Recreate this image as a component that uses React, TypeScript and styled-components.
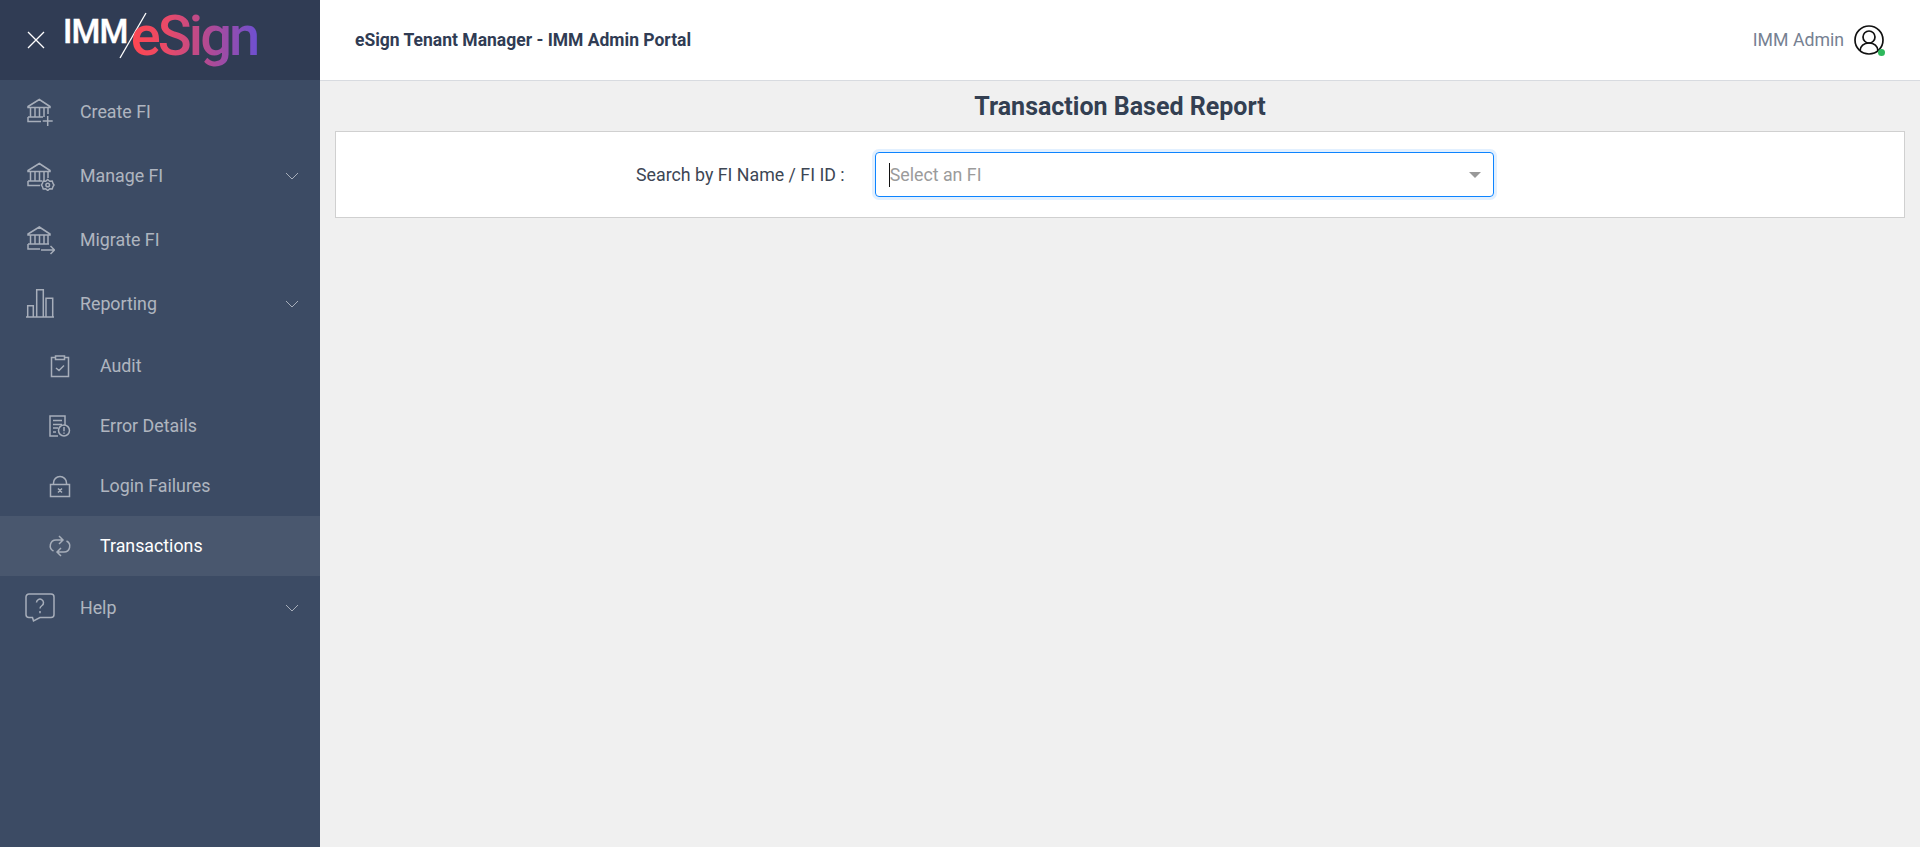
import React from 'react';
import styled, { createGlobalStyle } from 'styled-components';

const GlobalStyle = createGlobalStyle`
  html, body, #root {
    margin: 0;
    padding: 0;
    height: 100%;
  }
  body {
    font-family: Roboto, "Liberation Sans", sans-serif;
    background: #f0f0f0;
    overflow: hidden;
  }
  * {
    box-sizing: border-box;
  }
`;

const Page = styled.div`
  display: flex;
  height: 847px;
`;

const Sidebar = styled.aside`
  width: 320px;
  flex-shrink: 0;
  background: #3c4b64;
  display: flex;
  flex-direction: column;
`;

const Brand = styled.div`
  height: 80px;
  background: #303c54;
  display: flex;
  align-items: center;
  padding-left: 27px;
`;

const CloseButton = styled.button`
  width: 18px;
  height: 18px;
  padding: 0;
  margin-right: 18px;
  background: none;
  border: none;
  display: flex;
  cursor: pointer;
`;

const Logo = styled.div`
  display: flex;
  align-items: flex-start;
  height: 80px;
`;

const LogoImm = styled.span`
  font-size: 33px;
  font-weight: 500;
  line-height: 33px;
  letter-spacing: -0.8px;
  color: #fff;
  margin-top: 15px;
  -webkit-text-stroke: 0.4px #fff;
`;

const LogoSlash = styled.svg`
  width: 30px;
  height: 50px;
  margin: 11px -18px 0 -9px;
  flex-shrink: 0;
`;

const LogoESign = styled.span`
  font-size: 56px;
  font-weight: 500;
  line-height: 56px;
  letter-spacing: -2.9px;
  margin-top: 8px;
  padding-bottom: 10px;
  background: linear-gradient(90deg, #ff4650 0%, #e94a68 28%, #b04a94 62%, #6f50d0 100%);
  -webkit-background-clip: text;
  background-clip: text;
  color: transparent;
`;

const Nav = styled.nav`
  display: flex;
  flex-direction: column;
`;

const NavItem = styled.a<{ $sub?: boolean; $active?: boolean }>`
  height: ${({ $sub }) => ($sub ? '60px' : '64px')};
  display: flex;
  align-items: center;
  padding-left: ${({ $sub }) => ($sub ? '45px' : '25px')};
  padding-right: 21px;
  padding-bottom: 1px;
  font-size: 17.8px;
  color: ${({ $active }) => ($active ? '#fff' : 'rgba(255, 255, 255, 0.6)')};
  background: ${({ $active }) => ($active ? 'rgba(255, 255, 255, 0.07)' : 'transparent')};
  cursor: pointer;
`;

const NavIcon = styled.svg`
  width: 30px;
  height: 30px;
  margin-right: 25px;
  flex-shrink: 0;
  fill: none;
  stroke: #a7aeba;
  stroke-width: 1.5;
`;

const NavLabel = styled.span`
  flex: 1;
`;

const Chevron = styled.svg`
  width: 14px;
  height: 8px;
  fill: none;
  stroke: #a7aeba;
  stroke-width: 1;
`;

const Main = styled.div`
  flex: 1;
  display: flex;
  flex-direction: column;
  min-width: 0;
`;

const Header = styled.header`
  height: 81px;
  flex-shrink: 0;
  background: #fff;
  border-bottom: 1px solid #d8dbe0;
  display: flex;
  align-items: center;
  justify-content: space-between;
  padding: 0 36px 0 35px;
`;

const PortalName = styled.div`
  font-size: 17.5px;
  font-weight: 700;
  color: #303c54;
`;

const UserBox = styled.div`
  display: flex;
  align-items: center;
  gap: 10px;
  font-size: 17.7px;
  color: #768192;
`;

const Avatar = styled.div`
  width: 30px;
  height: 30px;
  position: relative;
`;

const AvatarSvg = styled.svg`
  width: 30px;
  height: 30px;
  fill: none;
  stroke: #111;
  stroke-width: 1.7;
  display: block;
`;

const OnlineDot = styled.span`
  position: absolute;
  right: -1px;
  bottom: -1px;
  width: 7px;
  height: 7px;
  border-radius: 50%;
  background: #2eb85c;
`;

const Content = styled.main`
  flex: 1;
  padding: 0 15px;
`;

const PageTitle = styled.h1`
  margin: 0;
  height: 50px;
  font-size: 25px;
  font-weight: 700;
  line-height: 51px;
  text-align: center;
  color: #333f52;
`;

const FilterCard = styled.section`
  height: 87px;
  background: #fff;
  border: 1px solid #d0d0d0;
  display: flex;
  align-items: center;
  padding-left: 300px;
`;

const FilterLabel = styled.label`
  font-size: 17.8px;
  color: #3d4654;
  margin-right: 30px;
  white-space: nowrap;
`;

const SelectBox = styled.div`
  width: 619px;
  height: 45px;
  border: 1px solid #0d84ff;
  border-radius: 4px;
  box-shadow: 0 0 0 3px #e2f0ff;
  display: flex;
  align-items: center;
  padding: 0 12px 0 13px;
`;

const Caret = styled.span`
  width: 1px;
  height: 24px;
  background: #111;
`;

const Placeholder = styled.span`
  flex: 1;
  font-size: 17.8px;
  color: #9b9b9b;
`;

const DropArrow = styled.span`
  width: 0;
  height: 0;
  border-left: 6px solid transparent;
  border-right: 6px solid transparent;
  border-top: 6px solid #999;
`;

const roof = 'M14.3 2.5 25 9.5v1H3v-1zM5.500 10.500V20M10 10.500V20M14.500 10.500V20M19 10.500V20M23 10.500V17';

const CreateIcon = () => (
  <NavIcon viewBox="0 0 30 30">
    <path d={roof} />
    <path d="M3 20h15M3 20v4.500h13" />
    <path d="M22.700 19v10M17.700 24h10" />
  </NavIcon>
);

const ManageIcon = () => (
  <NavIcon viewBox="0 0 30 30">
    <path d={roof} />
    <path d="M3 20h14M3 20v4.500h12" />
    <circle cx="22.700" cy="24" r="1.800" />
    <path d="M22.700 18.500l2 1.800 2.500-.3.800 2.500 1 1.500-1 1.500-.8 2.500-2.500-.3-2 1.800-2-1.800-2.500.3-.8-2.500-1-1.500 1-1.500.8-2.500 2.500.3z" />
  </NavIcon>
);

const MigrateIcon = () => (
  <NavIcon viewBox="0 0 30 30">
    <path d="M14.300 2 25 9v1H3V9zM5.500 10V19M10 10V19M14.500 10V19M19 10V19M23 10V19" />
    <path d="M3 19h21M3 19v5h12M16 25h13.500M25.500 21l4 4-4 4" />
  </NavIcon>
);

const ReportIcon = () => (
  <NavIcon viewBox="0 0 30 30">
    <path d="M1 28h28M2.700 28V16.700h5.600V28M11.700 28V.8h6.600V28M21 28V9.300h6.700V28" />
  </NavIcon>
);

const AuditIcon = () => (
  <NavIcon viewBox="0 0 30 30">
    <path d="M10.500 6.500h-4v19h17v-19h-4M10.500 5h9v3.500h-9zM11 17l3 2.500 5-5" />
  </NavIcon>
);

const ErrorIcon = () => (
  <NavIcon viewBox="0 0 30 30">
    <path d="M13 25H5V5h15v9M8 9.500h9M8 13.500h9M8 17h5M8 21h3" />
    <circle cx="19" cy="19.500" r="5.500" />
    <path d="M19 16v4.200M19 21.500v1.300" />
  </NavIcon>
);

const LockIcon = () => (
  <NavIcon viewBox="0 0 30 30">
    <path d="M5.500 13.500h19v12h-19zM8.500 13.500V12a6.500 6.500 0 0 1 13 0v1.500M13 17.500l4 4M17 17.500l-4 4" />
  </NavIcon>
);

const SwapIcon = () => (
  <NavIcon viewBox="0 0 30 30">
    <path d="M14 5l4 4-4 4M18 9h-7a5.800 5.800 0 0 0-2.500 11M16 25l-4-4 4-4M12 21h7a5.800 5.800 0 0 0 2.500-11" />
  </NavIcon>
);

const HelpIcon = () => (
  <NavIcon viewBox="0 0 30 30">
    <path d="M4 1h22a3 3 0 0 1 3 3v17.500a3 3 0 0 1-3 3H15L8.500 28 7.500 24.500H4a3 3 0 0 1-3-3V4a3 3 0 0 1 3-3z" />
    <path d="M11.500 9.500a3.500 3.500 0 1 1 5.500 3c-1.200.8-2 1.500-2 3M15 18v2.200" />
  </NavIcon>
);

const ChevronDown = () => (
  <Chevron viewBox="0 0 14 8">
    <path d="M1 1l6 6 6-6" />
  </Chevron>
);

export default function App() {
  return (
    <Page>
      <GlobalStyle />
      <Sidebar>
        <Brand>
          <CloseButton aria-label="Close menu">
            <svg width="18" height="18" viewBox="0 0 18 18" fill="none" stroke="#fff" strokeWidth="1.3">
              <path d="M1 1l16 16M17 1L1 17" />
            </svg>
          </CloseButton>
          <Logo>
            <LogoImm>IMM</LogoImm>
            <LogoSlash viewBox="0 0 30 50" fill="none" stroke="#fff" strokeWidth="1.300">
              <path d="M27 2L1 47" />
            </LogoSlash>
            <LogoESign>eSign</LogoESign>
          </Logo>
        </Brand>
        <Nav>
          <NavItem>
            <CreateIcon />
            <NavLabel>Create FI</NavLabel>
          </NavItem>
          <NavItem>
            <ManageIcon />
            <NavLabel>Manage FI</NavLabel>
            <ChevronDown />
          </NavItem>
          <NavItem>
            <MigrateIcon />
            <NavLabel>Migrate FI</NavLabel>
          </NavItem>
          <NavItem>
            <ReportIcon />
            <NavLabel>Reporting</NavLabel>
            <ChevronDown />
          </NavItem>
          <NavItem $sub>
            <AuditIcon />
            <NavLabel>Audit</NavLabel>
          </NavItem>
          <NavItem $sub>
            <ErrorIcon />
            <NavLabel>Error Details</NavLabel>
          </NavItem>
          <NavItem $sub>
            <LockIcon />
            <NavLabel>Login Failures</NavLabel>
          </NavItem>
          <NavItem $sub $active>
            <SwapIcon />
            <NavLabel>Transactions</NavLabel>
          </NavItem>
          <NavItem>
            <HelpIcon />
            <NavLabel>Help</NavLabel>
            <ChevronDown />
          </NavItem>
        </Nav>
      </Sidebar>
      <Main>
        <Header>
          <PortalName>eSign Tenant Manager - IMM Admin Portal</PortalName>
          <UserBox>
            IMM Admin
            <Avatar>
              <AvatarSvg viewBox="0 0 30 30">
                <circle cx="15" cy="15" r="14" />
                <circle cx="15" cy="12" r="6" />
                <path d="M6 26c0-5 4-8 9-8s9 3 9 8" />
              </AvatarSvg>
              <OnlineDot />
            </Avatar>
          </UserBox>
        </Header>
        <Content>
          <PageTitle>Transaction Based Report</PageTitle>
          <FilterCard>
            <FilterLabel>Search by FI Name / FI ID :</FilterLabel>
            <SelectBox>
              <Caret />
              <Placeholder>Select an FI</Placeholder>
              <DropArrow />
            </SelectBox>
          </FilterCard>
        </Content>
      </Main>
    </Page>
  );
}
